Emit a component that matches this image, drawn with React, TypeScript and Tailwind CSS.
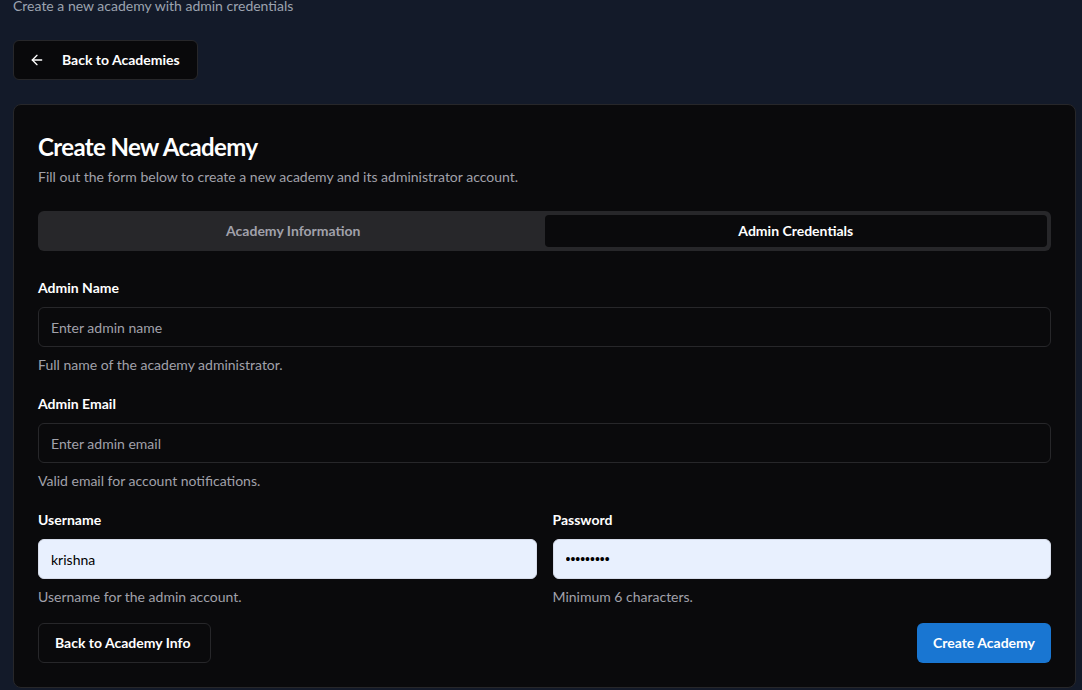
import { ArrowLeft } from "lucide-react";

const font = { fontFamily: 'Lato, "Noto Sans", sans-serif' };
const dotFont = { fontFamily: '"Liberation Sans", Arial, sans-serif' };

function Field({
  label,
  placeholder,
  value,
  type = "text",
  help,
  filled = false,
}: {
  label: string;
  placeholder?: string;
  value?: string;
  type?: string;
  help: string;
  filled?: boolean;
}) {
  return (
    <div className="flex flex-col">
      <label className="text-sm font-bold leading-5 text-white">{label}</label>
      <input
        type={type}
        placeholder={placeholder}
        defaultValue={value}
        className={`mt-[9px] h-10 w-full rounded-md border px-3 text-sm outline-none ${
          filled
            ? "border-[#d6dcea] bg-[#e8f0fe] text-black"
            : "border-[#27272a] bg-transparent text-white placeholder:text-[#a1a1aa]"
        }`}
        style={type === "password" ? dotFont : font}
      />
      <p className="mt-2 text-sm leading-5 text-[#a1a1aa]">{help}</p>
    </div>
  );
}

export default function App() {
  return (
    <div className="min-h-screen bg-[#131a29] pl-[13px] pr-[6px] pb-[3px] pt-px" style={font}>
      <p className="-mt-[5px] text-sm leading-5 text-[#9ca3af]">Create a new academy with admin credentials</p>

      <button className="mt-[24px] flex h-10 items-center gap-[17px] rounded-md border border-[#27272a] bg-[#09090b] pl-[15px] pr-[17px] text-sm font-bold text-white">
        <ArrowLeft className="h-4 w-4" strokeWidth={2} />
        Back to Academies
      </button>

      <div className="mt-6 rounded-lg border border-[#27272a] bg-[#0a0a0c] px-6 pb-6 pt-[24px]">
        <h2 className="text-2xl font-bold leading-9 tracking-tight text-white">Create New Academy</h2>
        <p className="mt-[2px] text-sm leading-5 text-[#a1a1aa]">
          Fill out the form below to create a new academy and its administrator account.
        </p>

        <div className="mt-[24px] grid h-10 grid-cols-2 rounded-md bg-[#27272a] p-1">
          <button className="rounded-sm text-sm font-bold text-[#a1a1aa]">Academy Information</button>
          <button className="rounded-sm bg-[#0a0a0c] text-sm font-bold text-white">Admin Credentials</button>
        </div>

        <div className="mt-[27px] flex flex-col gap-[19px]">
          <Field label="Admin Name" placeholder="Enter admin name" help="Full name of the academy administrator." />
          <Field label="Admin Email" placeholder="Enter admin email" help="Valid email for account notifications." />
          <div className="grid grid-cols-2 gap-4">
            <Field label="Username" value="krishna" help="Username for the admin account." filled />
            <Field label="Password" value="secret123" type="password" help="Minimum 6 characters." filled />
          </div>
        </div>

        <div className="mt-4 flex items-center justify-between">
          <button className="h-10 rounded-md border border-[#27272a] pl-4 pr-5 text-sm font-bold text-white">
            Back to Academy Info
          </button>
          <button className="h-10 rounded-md bg-[#1976d2] px-4 text-sm font-bold text-white">Create Academy</button>
        </div>
      </div>
    </div>
  );
}
